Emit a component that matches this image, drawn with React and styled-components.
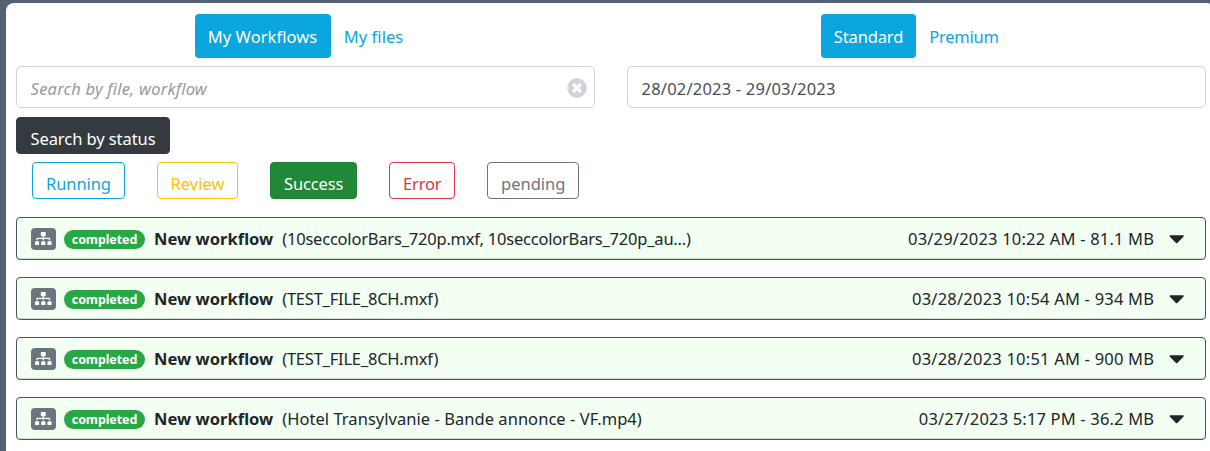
import React from 'react';
import styled, { createGlobalStyle } from 'styled-components';
import { FaSitemap, FaCaretDown, FaTimesCircle } from 'react-icons/fa';

const GlobalStyle = createGlobalStyle`
  *, *::before, *::after { box-sizing: border-box; }
  body {
    margin: 0;
    background: #546173;
    font-family: 'Noto Sans', 'Open Sans', sans-serif;
    font-size: 16.5px;
    line-height: 24px;
    color: #212529;
    overflow: hidden;
  }
  button, input { font: inherit; }
`;

const Page = styled.div`
  height: 451px;
  padding: 3px 0 0 6px;
`;

const Panel = styled.main`
  height: 448px;
  padding: 11px 4px 0 10px;
  background: #fff;
  border-radius: 8px 2px 0 0;
`;

const Columns = styled.div`
  display: grid;
  grid-template-columns: 1fr 1fr;
  column-gap: 32px;
`;

const Tabs = styled.nav`
  display: flex;
  justify-content: center;
  height: 44px;
  margin-bottom: 8px;
`;

const Tab = styled.button`
  width: ${(p) => p.$width}px;
  padding: 2px 0 0;
  border: 0;
  border-radius: 4px;
  text-align: center;
  white-space: nowrap;
  letter-spacing: ${(p) => p.$tracking || 0}px;
  background: ${(p) => (p.$active ? '#0aa6dd' : 'transparent')};
  color: ${(p) => (p.$active ? '#fff' : '#0aa6dd')};
`;

const Field = styled.div`
  display: flex;
  align-items: center;
  height: 42px;
  padding: 0 7px 0 13.6px;
  border: 1px solid #ced4da;
  border-radius: 5px;
  color: #ced4da;
`;

const Input = styled.input`
  flex: 1;
  min-width: 0;
  height: 40px;
  padding: 2px 0 0;
  border: 0;
  outline: 0;
  background: transparent;
  color: #495057;
  letter-spacing: 0.2px;

  &::placeholder {
    color: #999;
    opacity: 1;
    font-style: italic;
  }
`;

const ClearIcon = styled(FaTimesCircle)`
  width: 20px;
  height: 20px;
  margin-top: 2px;
`;

const tones = {
  dark: ['#343a40', '#343a40', '#fff'],
  info: ['#fff', '#0aa6dd', '#0aa6dd'],
  warning: ['#fff', '#ffc107', '#ffc107'],
  success: ['#218838', '#1e7e34', '#fff'],
  danger: ['#fff', '#dc3545', '#dc3545'],
  muted: ['#fff', '#6c757d', '#6c757d'],
};

const Button = styled.button`
  display: block;
  width: ${(p) => p.$width}px;
  height: 37px;
  padding: 6px 0 0;
  border: 1px solid ${(p) => tones[p.$tone][1]};
  border-radius: 4px;
  background: ${(p) => tones[p.$tone][0]};
  color: ${(p) => tones[p.$tone][2]};
  text-align: center;
  white-space: nowrap;
  letter-spacing: ${(p) => p.$tracking || 0}px;
`;

const StatusHeader = styled.div`
  margin: 9px 0 8px;
`;

const StatusList = styled.div`
  display: flex;
  gap: 32px;
  padding-left: 16px;
`;

const Workflows = styled.section`
  display: flex;
  flex-direction: column;
  gap: 17px;
  margin-top: 18px;
`;

const Row = styled.article`
  display: flex;
  align-items: center;
  height: 43px;
  padding: 0 21px 0 14px;
  border: 1px solid #4f5357;
  border-radius: 4px;
  background: #f3fff2;
  box-shadow: inset 0 -1px 0 #d2ddd2;
  white-space: nowrap;
`;

const TypeIcon = styled.span`
  display: flex;
  align-items: center;
  justify-content: center;
  width: 25px;
  height: 22px;
  border-radius: 4px;
  background: #6c757d;
  color: #fff;

  svg { width: 16.6px; height: 13.3px; }
`;

const Badge = styled.span`
  width: 81px;
  height: 19px;
  margin: 2px 9px 0 8px;
  border-radius: 10px;
  background: #28a745;
  color: #fff;
  font-size: 12.5px;
  font-weight: 700;
  line-height: 19px;
  text-align: center;
  letter-spacing: -0.1px;
`;

const Name = styled.strong`
  width: 128.2px;
  font-weight: 700;
  letter-spacing: 0.04px;
`;

const Files = styled.span`
  flex: 1;
  letter-spacing: ${(p) => p.$tracking}px;
`;

const Meta = styled.span`
  margin-right: 14.5px;
  letter-spacing: ${(p) => p.$tracking}px;
`;

const Caret = styled(FaCaretDown)`
  width: 15.3px;
  height: 24.4px;
`;

const statuses = [
  { label: 'Running', tone: 'info', width: 93, tracking: -0.1 },
  { label: 'Review', tone: 'warning', width: 81 },
  { label: 'Success', tone: 'success', width: 87.4, tracking: -0.12 },
  { label: 'Error', tone: 'danger', width: 65.8, tracking: -0.15 },
  { label: 'pending', tone: 'muted', width: 92 },
];

const workflows = [
  { files: '(10seccolorBars_720p.mxf, 10seccolorBars_720p_au...)', ft: -0.21, meta: '03/29/2023 10:22 AM - 81.1 MB', mt: 0.19 },
  { files: '(TEST_FILE_8CH.mxf)', ft: -0.22, meta: '03/28/2023 10:54 AM - 934 MB', mt: 0.21 },
  { files: '(TEST_FILE_8CH.mxf)', ft: -0.22, meta: '03/28/2023 10:51 AM - 900 MB', mt: 0.21 },
  { files: '(Hotel Transylvanie - Bande annonce - VF.mp4)', ft: 0.04, meta: '03/27/2023 5:17 PM - 36.2 MB', mt: 0.17 },
];

export default function App() {
  return (
    <Page>
      <GlobalStyle />
      <Panel>
        <Columns>
          <Tabs>
            <Tab $active $width={136} $tracking={0.06}>My Workflows</Tab>
            <Tab $width={86} $tracking={0.08}>My files</Tab>
          </Tabs>
          <Tabs>
            <Tab $active $width={95} $tracking={-0.12}>Standard</Tab>
            <Tab $width={96} $tracking={-0.25}>Premium</Tab>
          </Tabs>
          <Field>
            <Input placeholder="Search by file, workflow" />
            <ClearIcon />
          </Field>
          <Field>
            <Input defaultValue="28/02/2023 - 29/03/2023" />
          </Field>
        </Columns>
        <StatusHeader>
          <Button $tone="dark" $width={154} $tracking={-0.07}>Search by status</Button>
        </StatusHeader>
        <StatusList>
          {statuses.map((s) => (
            <Button key={s.label} $tone={s.tone} $width={s.width} $tracking={s.tracking}>{s.label}</Button>
          ))}
        </StatusList>
        <Workflows>
          {workflows.map((w) => (
            <Row key={w.meta}>
              <TypeIcon><FaSitemap /></TypeIcon>
              <Badge>completed</Badge>
              <Name>New workflow</Name>
              <Files $tracking={w.ft}>{w.files}</Files>
              <Meta $tracking={w.mt}>{w.meta}</Meta>
              <Caret />
            </Row>
          ))}
        </Workflows>
      </Panel>
    </Page>
  );
}
